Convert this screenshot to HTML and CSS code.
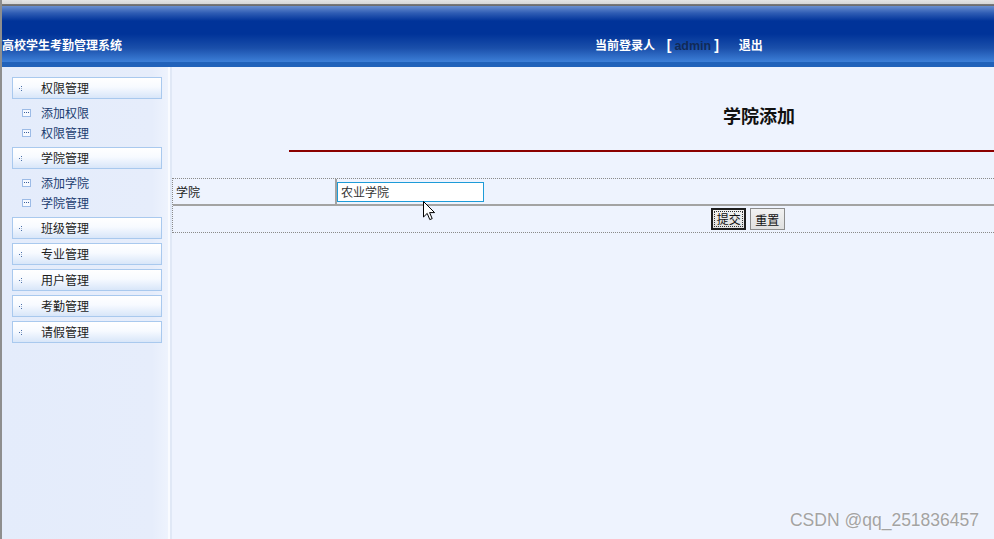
FILE: index.html
```html
<!DOCTYPE html>
<html lang="zh-CN">
<head>
  <meta charset="UTF-8">
  <title>高校学生考勤管理系统</title>
  <link rel="stylesheet" href="styles.css">
</head>
<body>

  <div class="topline"></div>
  <div class="header">
    <div class="sys-title">高校学生考勤管理系统</div>
    <div class="user-bar">
      当前登录人 <span class="bracket">[<span class="uname">admin</span>]</span>
      <a class="logout">退出</a>
    </div>
  </div>
  <div class="header-band"></div>

  <div class="wrap">
    <div class="sidebar">
      <div class="menu-head"><svg class="dot-plus" width="5" height="5"><rect x="2" y="0" width="1" height="1"/><rect x="0" y="2" width="1" height="1"/><rect x="2" y="4" width="1" height="1"/><rect x="2" y="2" width="1" height="1" opacity=".5"/></svg>权限管理</div>
      <ul class="sub-menu">
        <li><span class="sq"></span>添加权限</li>
        <li><span class="sq"></span>权限管理</li>
      </ul>
      <div class="menu-head"><svg class="dot-plus" width="5" height="5"><rect x="2" y="0" width="1" height="1"/><rect x="0" y="2" width="1" height="1"/><rect x="2" y="4" width="1" height="1"/><rect x="2" y="2" width="1" height="1" opacity=".5"/></svg>学院管理</div>
      <ul class="sub-menu">
        <li><span class="sq"></span>添加学院</li>
        <li><span class="sq"></span>学院管理</li>
      </ul>
      <div class="menu-head"><svg class="dot-plus" width="5" height="5"><rect x="2" y="0" width="1" height="1"/><rect x="0" y="2" width="1" height="1"/><rect x="2" y="4" width="1" height="1"/><rect x="2" y="2" width="1" height="1" opacity=".5"/></svg>班级管理</div>
      <div class="menu-head"><svg class="dot-plus" width="5" height="5"><rect x="2" y="0" width="1" height="1"/><rect x="0" y="2" width="1" height="1"/><rect x="2" y="4" width="1" height="1"/><rect x="2" y="2" width="1" height="1" opacity=".5"/></svg>专业管理</div>
      <div class="menu-head"><svg class="dot-plus" width="5" height="5"><rect x="2" y="0" width="1" height="1"/><rect x="0" y="2" width="1" height="1"/><rect x="2" y="4" width="1" height="1"/><rect x="2" y="2" width="1" height="1" opacity=".5"/></svg>用户管理</div>
      <div class="menu-head"><svg class="dot-plus" width="5" height="5"><rect x="2" y="0" width="1" height="1"/><rect x="0" y="2" width="1" height="1"/><rect x="2" y="4" width="1" height="1"/><rect x="2" y="2" width="1" height="1" opacity=".5"/></svg>考勤管理</div>
      <div class="menu-head"><svg class="dot-plus" width="5" height="5"><rect x="2" y="0" width="1" height="1"/><rect x="0" y="2" width="1" height="1"/><rect x="2" y="4" width="1" height="1"/><rect x="2" y="2" width="1" height="1" opacity=".5"/></svg>请假管理</div>
    </div>

    <div class="main">
      <div class="main-inner">
        <h2 class="page-title">学院添加</h2>
        <hr class="title-line">
        <table class="form-table">
          <tr>
            <td class="label">学院</td>
            <td class="field"><input type="text" class="txt" value="农业学院"></td>
          </tr>
          <tr>
            <td colspan="2" class="btns">
              <button class="btn btn-focus"><span>提交</span></button>
              <button class="btn">重置</button>
            </td>
          </tr>
        </table>
      </div>
    </div>
  </div>

  <svg class="cursor" width="13" height="20" viewBox="0 0 13 20">
    <path d="M0.5 0.5 L0.5 16 L4.2 12.4 L6.8 18.6 L9.2 17.6 L6.6 11.6 L11.6 11.6 Z" fill="#fff" stroke="#000" stroke-width="1"/>
  </svg>

  <div class="watermark">CSDN @qq_251836457</div>

</body>
</html>
```

FILE: styles.css
```css
* {
  box-sizing: border-box;
}

html, body {
  height: 100%;
}

body {
  margin: 0;
  font-family: "Noto Sans CJK SC", "Liberation Sans", sans-serif;
  font-size: 12px;
  background: #eef3fe;
  border-left: 2px solid #8e8e8e;
  overflow: hidden;
  position: relative;
}

.topline {
  height: 6px;
  background: linear-gradient(to bottom, #e4e4e4 0, #d6d6d6 4px, #7c7c7c 4px, #6a6a6a 6px);
}

.header {
  height: 56px;
  display: flex;
  padding-top: 31px;
  color: #fff;
  font-weight: bold;
  line-height: 16px;
  background: linear-gradient(to bottom, #6a8fd0 0, #2f5db4 7px, #003399 15px, #003399 28px, #1a4faa 42px, #3d80d8 56px);
}

.sys-title {
  width: 593px;
  white-space: nowrap;
}

.user-bar {
  white-space: nowrap;
}

.bracket {
  margin-left: 9px;
  font-family: "Liberation Sans", sans-serif;
  font-size: 14px;
}

.uname {
  color: #112a58;
  font-size: 12.5px;
  padding: 0 3px 0 3px;
}

.logout {
  margin-left: 17px;
}

.header-band {
  height: 5px;
  background: #2162ba;
}

.wrap {
  display: flex;
  height: calc(100% - 67px);
}

.sidebar {
  width: 168px;
  padding: 10px 0 0 10px;
  background: linear-gradient(to right, #e4ecfb 0, #e6edfb 150px, #eef3fd 166px);
  border-right: 2px solid #f9fbff;
}

.menu-head {
  width: 150px;
  height: 22px;
  line-height: 20px;
  margin-bottom: 4px;
  padding-left: 28px;
  position: relative;
  color: #1c1c1c;
  border: 1px solid #a9c9ee;
  background: linear-gradient(to bottom, #ffffff 0, #f7faff 45%, #d8e6f9 100%);
}

.dot-plus {
  position: absolute;
  left: 6px;
  top: 8px;
  fill: #4a6fa8;
}

.sub-menu {
  list-style: none;
  margin: 0;
  padding: 0 0 4px 0;
}

.sub-menu li {
  height: 20px;
  line-height: 20px;
  padding-left: 29px;
  position: relative;
  color: #1b3c70;
}

.sub-menu .sq {
  position: absolute;
  left: 10px;
  top: 6px;
  width: 9px;
  height: 8px;
  border: 1px solid #9cbbe6;
  background: #f6f9ff;
}

.sub-menu .sq::after {
  content: "";
  position: absolute;
  left: 1px;
  top: 2px;
  width: 5px;
  height: 1px;
  background: repeating-linear-gradient(to right, #3a5f9a 0 1px, transparent 1px 2px);
}

.main {
  flex: 1;
  border-left: 2px solid #e0e8f6;
  overflow: hidden;
}

.main-inner {
  width: 1174px;
}

.page-title {
  margin: 0;
  padding-top: 36px;
  line-height: 24px;
  font-size: 18px;
  font-weight: bold;
  color: #111;
  text-align: center;
}

.title-line {
  width: 80%;
  height: 2px;
  margin: 23px auto 0;
  border: none;
  background: #8b0000;
}

.form-table {
  width: 1152px;
  margin-top: 26px;
  border: 1px dotted #8a8a8a;
  border-spacing: 0;
}

.form-table td {
  padding: 0;
  height: 27px;
  color: #1c1c1c;
}

.form-table .label {
  width: 162px;
  padding-left: 3px;
  border-bottom: 2px solid #a3a3a3;
}

.form-table .field {
  border-left: 2px solid #a3a3a3;
  border-bottom: 2px solid #a3a3a3;
}

.txt {
  display: block;
  width: 147px;
  height: 20px;
  margin: 0;
  padding: 0 3px;
  font: 12px "Noto Sans CJK SC", sans-serif;
  color: #333;
  border: 1px solid #1e9bd8;
  background: #fff;
  outline: none;
}

.form-table .btns {
  height: 26px;
  text-align: center;
}

.btn {
  height: 22px;
  width: 35px;
  padding: 0;
  margin: 0 0.5px;
  font: 12px "Noto Sans CJK SC", sans-serif;
  color: #111;
  vertical-align: middle;
  border: 1px solid #8c8c8c;
  background: linear-gradient(to bottom, #f2f2f2, #e0e0e0);
}

.btn-focus {
  border: 2px solid #1e1e1e;
  padding: 1px;
}

.btn-focus span {
  display: block;
  height: 100%;
  line-height: 14px;
  border: 1px dotted #333;
}

.cursor {
  position: absolute;
  left: 421px;
  top: 201px;
}

.watermark {
  position: absolute;
  right: 15px;
  bottom: 8px;
  font-family: "Liberation Sans", sans-serif;
  font-size: 17.5px;
  color: #a3a3a3;
  text-shadow: 0 0 2px #fff;
}
```
